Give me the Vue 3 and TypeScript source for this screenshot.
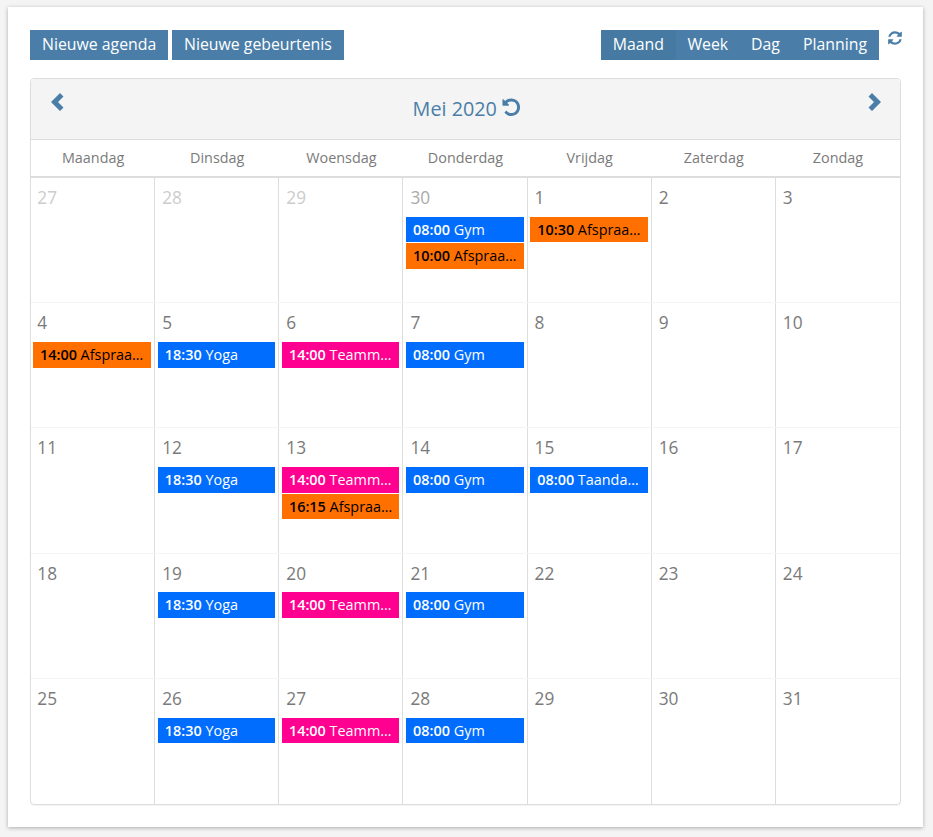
<script setup lang="ts">
type Ev = { time: string; title: string; kind: 'blue' | 'orange' | 'pink' }
type Day = { n: number; old?: boolean; events: Ev[] }

const gym: Ev = { time: '08:00', title: 'Gym', kind: 'blue' }
const yoga: Ev = { time: '18:30', title: 'Yoga', kind: 'blue' }
const team: Ev = { time: '14:00', title: 'Teammeeting', kind: 'pink' }
const afs = (time: string): Ev => ({ time, title: 'Afspraak maken', kind: 'orange' })

const dow = ['Maandag', 'Dinsdag', 'Woensdag', 'Donderdag', 'Vrijdag', 'Zaterdag', 'Zondag']
const views = ['Maand', 'Week', 'Dag', 'Planning']

const d = (n: number, events: Ev[] = [], old = false): Day => ({ n, events, old })
const weeks: Day[][] = [
  [d(27, [], true), d(28, [], true), d(29, [], true), d(30, [gym, afs('10:00')]), d(1, [afs('10:30')]), d(2), d(3)],
  [d(4, [afs('14:00')]), d(5, [yoga]), d(6, [team]), d(7, [gym]), d(8), d(9), d(10)],
  [d(11), d(12, [yoga]), d(13, [team, afs('16:15')]), d(14, [gym]), d(15, [{ time: '08:00', title: 'Taandarts', kind: 'blue' }]), d(16), d(17)],
  [d(18), d(19, [yoga]), d(20, [team]), d(21, [gym]), d(22), d(23), d(24)],
  [d(25), d(26, [yoga]), d(27, [team]), d(28, [gym]), d(29), d(30), d(31)],
]
</script>

<template>
  <div class="page">
    <div class="card">
      <div class="toolbar">
        <div class="actions">
          <button class="btn">Nieuwe agenda</button>
          <button class="btn">Nieuwe gebeurtenis</button>
        </div>
        <div class="right">
          <div class="views">
            <button v-for="(v, i) in views" :key="v" class="btn view" :class="{ active: i === 0 }">{{ v }}</button>
          </div>
          <svg class="refresh" viewBox="0 0 1792 1792" width="16" height="16">
            <path fill="currentColor" d="M1639 1056q0 5-1 7-64 268-268 434.5t-478 166.5q-146 0-282.5-55t-243.5-157l-129 129q-19 19-45 19t-45-19-19-45v-448q0-26 19-45t45-19h448q26 0 45 19t19 45-19 45l-137 137q71 66 161 102t187 36q134 0 250-65t186-179q11-17 53-117 8-23 30-23h192q13 0 22.5 9.5t9.5 22.5zm25-800v448q0 26-19 45t-45 19h-448q-26 0-45-19t-19-45 19-45l138-138q-148-137-349-137-134 0-250 65t-186 179q-11 17-53 117-8 23-30 23h-199q-13 0-22.5-9.5t-9.5-22.5v-7q65-268 270-434.5t480-166.5q146 0 284 55.5t245 156.5l130-129q19-19 45-19t45 19 19 45z" />
          </svg>
        </div>
      </div>

      <div class="calendar">
        <div class="head">
          <svg class="chev" viewBox="0 0 14 18" width="14" height="18">
            <path fill="currentColor" d="M9 0 12.500 3.500 7 9l5.500 5.500L9 18 0 9z" />
          </svg>
          <div class="title">
            <span>Mei 2020</span>
            <svg class="undo" viewBox="0 0 1792 1792" width="20.500" height="20.500">
              <path fill="currentColor" d="M1664 896q0 156-61 298t-164 245-245 164-298 61q-172 0-327-72.500t-264-204.500q-7-10-6.500-22.500t8.500-20.500l137-138q10-9 25-9 16 2 23 12 73 95 179 147t225 52q104 0 198.500-40.500t163.500-109.500 109.500-163.500 40.500-198.500-40.500-198.500-109.500-163.500-163.500-109.500-198.500-40.500q-98 0-188 35.500t-160 101.500l137 138q31 30 14 69-17 40-59 40h-448q-26 0-45-19t-19-45v-448q0-42 40-59 39-17 69 14l130 129q107-101 244.500-156.500t284.500-55.500q156 0 298 61t245 164 164 245 61 298z" />
            </svg>
          </div>
          <svg class="chev" viewBox="0 0 14 18" width="14" height="18">
            <path fill="currentColor" d="M5 0 1.500 3.500 7 9l-5.500 5.500L5 18l9-9z" />
          </svg>
        </div>
        <div class="dow">
          <div v-for="name in dow" :key="name" class="dow-cell">{{ name }}</div>
        </div>
        <div v-for="(week, w) in weeks" :key="w" class="week">
          <div v-for="(day, i) in week" :key="i" class="cell">
            <div class="num" :class="{ old: day.old, dim: day.n === 30 && w === 0 }">{{ day.n }}</div>
            <div
              v-for="(ev, j) in day.events"
              :key="j"
              class="event"
              :class="ev.kind"
            ><b>{{ ev.time }}</b> {{ ev.title }}</div>
          </div>
        </div>
      </div>
    </div>
  </div>
</template>

<style>
html, body { margin: 0; background: #f4f4f4; }
</style>

<style scoped>
.page {
  width: 933px;
  height: 837px;
  box-sizing: border-box;
  padding: 7px 10px 10px 8px;
  font-family: "Open Sans", "Liberation Sans", sans-serif;
  overflow: hidden;
}
.card {
  height: 820px;
  box-sizing: border-box;
  background: #fff;
  padding: 23px 22px 0;
  box-shadow: 0 1px 4px rgba(0, 0, 0, 0.3);
}
.toolbar {
  display: flex;
  justify-content: space-between;
  align-items: flex-start;
  height: 48px;
}
.actions { display: flex; gap: 3.600px; }
.right { display: flex; align-items: flex-start; margin-right: -2px; }
.views { display: flex; }
.btn {
  height: 30px;
  border: 0;
  background: #4a7ea8;
  color: #fff;
  font: 400 15.840px/27px "Open Sans", sans-serif;
  padding: 0 12.200px 2px 12px;
}
.view { padding: 0 11.500px 2px; }
.view:last-child { padding-right: 12px; }
.view.active { background: #467aa2; padding: 0 12px 2px 11.500px; }
.refresh { color: #4a7ea8; margin-left: 8px; }
.calendar {
  width: 871px;
  height: 727px;
  box-sizing: border-box;
  border: 1px solid #ddd;
  border-radius: 4px;
  box-shadow: 0 1px 1px rgba(0, 0, 0, 0.05);
  overflow: hidden;
}
.head {
  height: 61px;
  box-sizing: border-box;
  background: #f4f4f4;
  border-bottom: 1px solid #ddd;
  display: flex;
  justify-content: space-between;
  align-items: flex-start;
  padding: 14px 19px 0 20px;
  color: #4a7ea8;
}
.chev { display: block; }
.title {
  display: flex;
  align-items: center;
  gap: 4px;
  font-size: 19.800px;
  line-height: 28px;
  padding-top: 2px;
  margin-left: 2px;
}
.undo { position: relative; top: -2px; }
.dow {
  display: grid;
  grid-template-columns: repeat(7, 1fr);
  height: 38px;
  box-sizing: border-box;
  border-bottom: 2px solid #ddd;
}
.dow-cell {
  text-align: center;
  font-size: 14.400px;
  line-height: 35px;
  color: #7a7a7a;
}
.week {
  display: grid;
  grid-template-columns: repeat(7, 124.143px);
  margin-left: -1px;
  height: 125.200px;
  box-sizing: border-box;
  border-bottom: 1px solid #f4f4f4;
}
.week:last-child { border-bottom: 0; }
.cell {
  border-left: 1px solid #ddd;
  padding: 0 3px 0 2.700px;
  min-width: 0;
}
.cell:first-child { border-left: 0; padding-left: 3px; }
.num {
  font-size: 17.280px;
  line-height: 24px;
  padding: 8px 0 6.750px 4.300px;
  color: #7a7a7a;
}
.num.old { color: #ccc; }
.num.dim { color: #aaa; }
.event {
  height: 25.600px;
  margin-bottom: 1px;
  padding: 0 5px 0 7px;
  font-size: 14.400px;
  line-height: 26.400px;
  white-space: nowrap;
  overflow: hidden;
  text-overflow: ellipsis;
}
.event b { font-weight: 600; }
.blue { background: #006dff; color: #fff; }
.orange { background: #ff7000; color: #000; }
.pink { background: #ff0090; color: #fff; }
</style>
